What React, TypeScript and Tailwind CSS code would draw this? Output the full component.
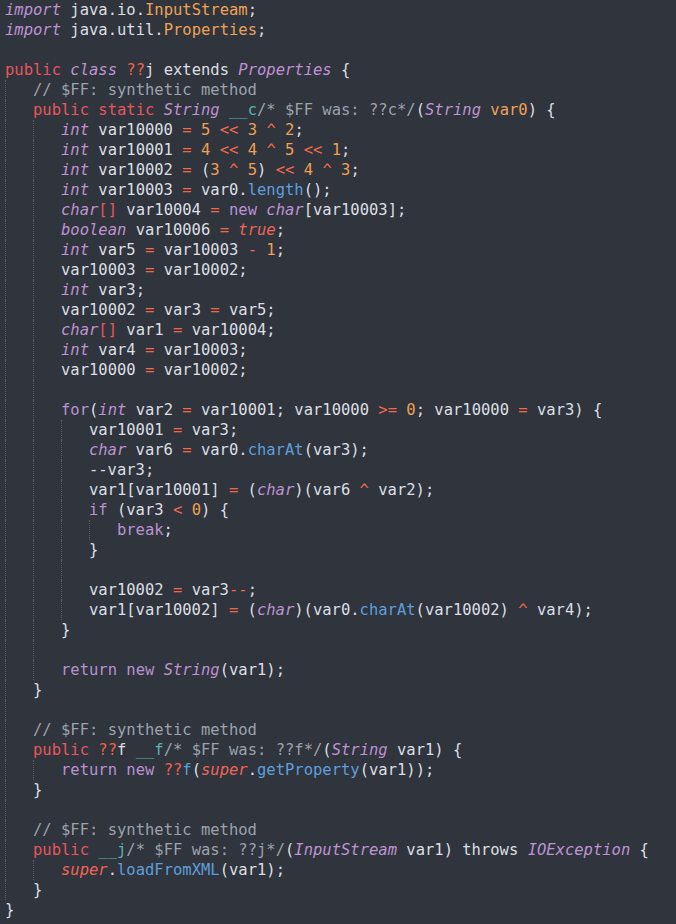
import React from 'react';

// token styles: «key|text» inside a line string
const tokenClass: Record<string, string> = {
  k: 'text-[#be93d2] italic',
  w: 'text-[#b792d2]',
  m: 'text-[#e5565f]',
  q: 'text-[#ee6149]',
  c: 'text-[#9ba2ac]',
  f: 'text-[#5f9edb]',
  n: 'text-[#f0a050]',
  o: 'text-[#f0694e]',
  a: 'text-[#eea257]',
  t: 'text-[#5ab3b0]',
  i: 'text-[#ef6557] italic',
  b: 'text-[#e5565f]',
};

type Line = [number, string?];

const code: Line[] = [
  [0, '«k|import» java.io.«a|InputStream»;'],
  [0, '«k|import» java.util.«a|Properties»;'],
  [0],
  [0, '«m|public» «k|class» «q|??»j extends «k|Properties» {'],
  [1, '«c|// $FF: synthetic method»'],
  [1, '«m|public static» «k|String» «t|__c»«c|/* $FF was: ??c*/»(«k|String» «a|var0») {'],
  [2, '«k|int» var10000 «o|=» «n|5» «o|<<» «n|3» «o|^» «n|2»;'],
  [2, '«k|int» var10001 «o|=» «n|4» «o|<<» «n|4» «o|^» «n|5» «o|<<» «n|1»;'],
  [2, '«k|int» var10002 «o|=» («n|3» «o|^» «n|5») «o|<<» «n|4» «o|^» «n|3»;'],
  [2, '«k|int» var10003 «o|=» var0.«f|length»();'],
  [2, '«k|char»«b|[]» var10004 «o|=» «w|new» «k|char»[var10003];'],
  [2, '«k|boolean» var10006 «o|=» «i|true»;'],
  [2, '«k|int» var5 «o|=» var10003 «o|-» «n|1»;'],
  [2, 'var10003 «o|=» var10002;'],
  [2, '«k|int» var3;'],
  [2, 'var10002 «o|=» var3 «o|=» var5;'],
  [2, '«k|char»«b|[]» var1 «o|=» var10004;'],
  [2, '«k|int» var4 «o|=» var10003;'],
  [2, 'var10000 «o|=» var10002;'],
  [2],
  [2, '«w|for»(«k|int» var2 «o|=» var10001; var10000 «o|>=» «n|0»; var10000 «o|=» var3) {'],
  [3, 'var10001 «o|=» var3;'],
  [3, '«k|char» var6 «o|=» var0.«f|charAt»(var3);'],
  [3, '--var3;'],
  [3, 'var1[var10001] «o|=» («k|char»)(var6 «o|^» var2);'],
  [3, '«w|if» (var3 «o|<» «n|0») {'],
  [4, '«w|break»;'],
  [3, '}'],
  [3],
  [3, 'var10002 «o|=» var3«o|--»;'],
  [3, 'var1[var10002] «o|=» («k|char»)(var0.«f|charAt»(var10002) «o|^» var4);'],
  [2, '}'],
  [2],
  [2, '«w|return» «w|new» «k|String»(var1);'],
  [1, '}'],
  [1],
  [1, '«c|// $FF: synthetic method»'],
  [1, '«m|public» «q|??»f «t|__f»«c|/* $FF was: ??f*/»(«k|String» var1) {'],
  [2, '«w|return» «w|new» «q|??»«f|f»(«i|super».«f|getProperty»(var1));'],
  [1, '}'],
  [1],
  [1, '«c|// $FF: synthetic method»'],
  [1, '«m|public» «t|__j»«c|/* $FF was: ??j*/»(«k|InputStream» var1) throws «k|IOException» {'],
  [2, '«i|super».«f|loadFromXML»(var1);'],
  [1, '}'],
  [0, '}'],
];

function renderTokens(src: string) {
  const out: React.ReactNode[] = [];
  const re = /«(\w)\|([^»]*)»/g;
  let last = 0;
  let m: RegExpExecArray | null;
  let n = 0;
  while ((m = re.exec(src))) {
    if (m.index > last) out.push(<span key={n++}>{src.slice(last, m.index)}</span>);
    out.push(
      <span key={n++} className={tokenClass[m[1]]}>
        {m[2]}
      </span>
    );
    last = re.lastIndex;
  }
  if (last < src.length) out.push(<span key={n++}>{src.slice(last)}</span>);
  return out;
}

export default function App() {
  return (
    <div
      className="min-h-[924px] w-[676px] overflow-hidden bg-[#2f343d] pl-[5px] text-[15.5px] leading-[20px] text-[#dcdfe4]"
      style={{ fontFamily: '"DejaVu Sans Mono", "Liberation Mono", monospace' }}
    >
      {code.map(([indent, text], idx) => (
        <div key={idx} className="flex h-[20px] whitespace-pre">
          {Array.from({ length: indent }).map((_, g) => (
            <span key={g} className="inline-block h-full w-[3ch] shrink-0 border-l border-dotted border-[#59606b]" />
          ))}
          {text && <span>{renderTokens(text)}</span>}
        </div>
      ))}
    </div>
  );
}
